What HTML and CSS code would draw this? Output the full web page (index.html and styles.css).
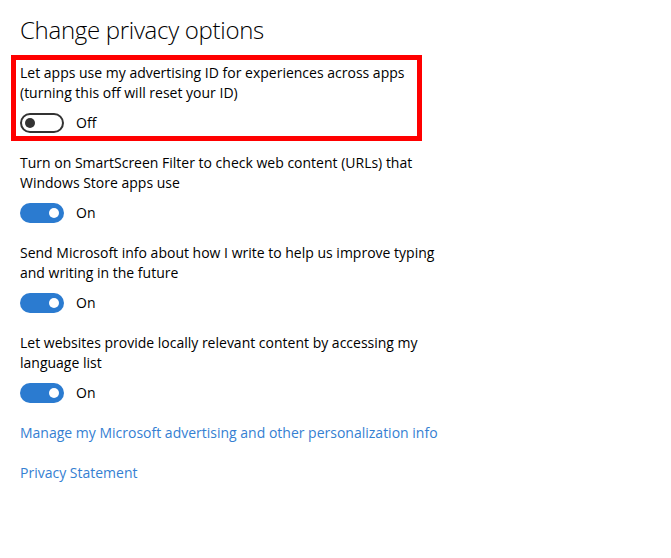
FILE: index.html
```html
<!DOCTYPE html>
<html>
<head>
<meta charset="utf-8">
<link rel="stylesheet" href="styles.css">
</head>
<body>
<div class="page">
  <h1 class="title">Change privacy options</h1>

  <div class="option highlight">
    <p class="desc">Let apps use my advertising ID for experiences across apps<br>(turning this off will reset your ID)</p>
    <div class="switch-row">
      <span class="toggle off"><span class="knob"></span></span>
      <span class="state">Off</span>
    </div>
  </div>

  <div class="option">
    <p class="desc">Turn on SmartScreen Filter to check web content (URLs) that<br>Windows Store apps use</p>
    <div class="switch-row">
      <span class="toggle on"><span class="knob"></span></span>
      <span class="state">On</span>
    </div>
  </div>

  <div class="option">
    <p class="desc">Send Microsoft info about how I write to help us improve typing<br>and writing in the future</p>
    <div class="switch-row">
      <span class="toggle on"><span class="knob"></span></span>
      <span class="state">On</span>
    </div>
  </div>

  <div class="option">
    <p class="desc">Let websites provide locally relevant content by accessing my<br>language list</p>
    <div class="switch-row">
      <span class="toggle on"><span class="knob"></span></span>
      <span class="state">On</span>
    </div>
  </div>

  <a class="link" href="#">Manage my Microsoft advertising and other personalization info</a>
  <a class="link" href="#">Privacy Statement</a>
</div>
</body>
</html>
```

FILE: styles.css
```css
html, body {
  margin: 0;
  padding: 0;
  background: #ffffff;
}

.page {
  display: flex;
  flex-direction: column;
  align-items: flex-start;
  padding: 14px 0 0 20px;
  font-family: "Open Sans", "Noto Sans", sans-serif;
  color: #000;
}

.title {
  margin: 0;
  font-size: 24px;
  line-height: 32px;
  font-weight: 300;
  letter-spacing: -0.3px;
}

.option {
  display: flex;
  flex-direction: column;
  margin-top: 20px;
}

.highlight {
  margin-top: 9px;
  margin-left: -9px;
  width: 411px;
  box-sizing: border-box;
  border: 5px solid #ff0000;
  padding: 3px 0 3px 4px;
}

.highlight + .option {
  margin-top: 12px;
}

.desc {
  margin: 0;
  font-size: 14px;
  line-height: 20px;
  white-space: nowrap;
}

.switch-row {
  display: flex;
  align-items: center;
  gap: 12px;
  margin-top: 10px;
  height: 20px;
}

.toggle {
  width: 44px;
  height: 20px;
  box-sizing: border-box;
  border-radius: 10px;
  display: flex;
  align-items: center;
  padding: 0 5px;
}

.toggle .knob {
  width: 10px;
  height: 10px;
  border-radius: 50%;
}

.toggle.off {
  border: 2px solid #333333;
  background: #ffffff;
  padding: 0 3px;
}

.toggle.off .knob {
  background: #333333;
}

.toggle.on {
  background: #2b7bd0;
  justify-content: flex-end;
}

.toggle.on .knob {
  background: #ffffff;
}

.state {
  font-size: 14px;
  line-height: 20px;
}

.link {
  margin-top: 20px;
  font-size: 14px;
  line-height: 20px;
  color: #3580d2;
  text-decoration: none;
}
```
